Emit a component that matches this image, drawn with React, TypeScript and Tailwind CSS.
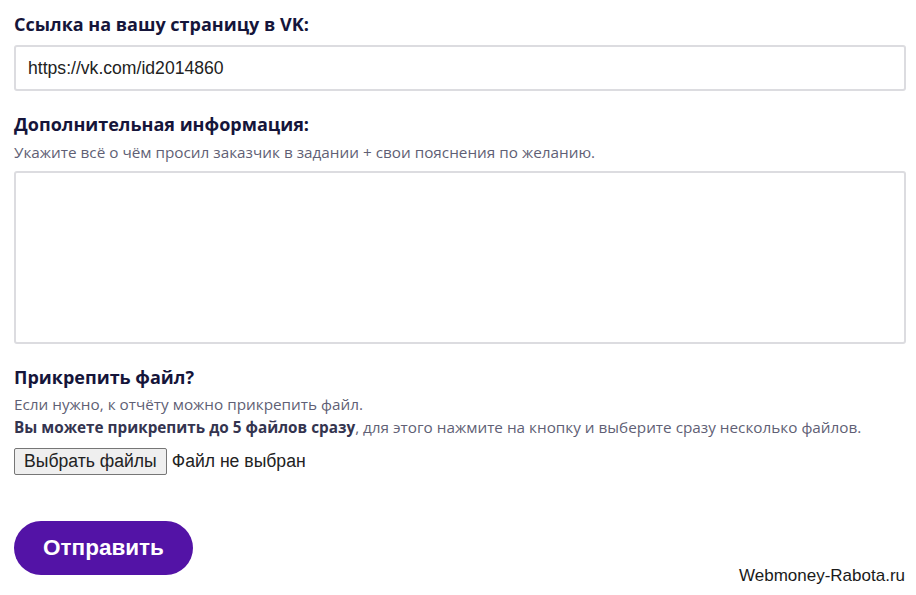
import { useState } from 'react';

// Report form: VK link, extra notes, attachments, submit
export default function App() {
  const [link, setLink] = useState('https://vk.com/id2014860');
  const [notes, setNotes] = useState('');

  const heading = "font-['Open_Sans',sans-serif] text-[18px] font-bold leading-6 text-[#15153a]";
  const hint = "font-['Open_Sans',sans-serif] text-[15.3px] leading-[23px] text-[#5f5f75]";

  return (
    <div className="relative h-[595px] w-[916px] overflow-hidden bg-white">
      <form className="flex flex-col px-[14px] pt-[12px]" onSubmit={(e) => e.preventDefault()}>
        <label className={heading}>Ссылка на вашу страницу в VK:</label>
        <input
          value={link}
          onChange={(e) => setLink(e.target.value)}
          className="mt-[9px] h-[46px] w-[892px] rounded-[3px] border-2 border-[#dcdce0] bg-white px-[12px] font-['Liberation_Sans',Arial,sans-serif] text-[17.6px] text-[#222] outline-none"
        />

        <label className={`${heading} mt-[21px]`}>Дополнительная информация:</label>
        <p className={`${hint} mt-[5px]`}>
          Укажите всё о чём просил заказчик в задании + свои пояснения по желанию.
        </p>
        <textarea
          value={notes}
          onChange={(e) => setNotes(e.target.value)}
          className="mt-[7px] h-[173px] w-[892px] resize-none rounded-[3px] border-2 border-[#dcdce0] bg-white p-3 outline-none"
        />

        <label className={`${heading} mt-[21px]`}>Прикрепить файл?</label>
        <p className={`${hint} mt-[4px]`}>Если нужно, к отчёту можно прикрепить файл.</p>
        <p className={hint}>
          <b className="font-bold text-[#34344f]">Вы можете прикрепить до 5 файлов сразу</b>, для этого нажмите на кнопку и выберите сразу несколько файлов.
        </p>
        <div className="mt-[9px] flex items-center gap-[5px] font-['Liberation_Sans',Arial,sans-serif] text-[17.6px] text-[#222]">
          <button
            type="button"
            className="h-[27px] rounded-[2px] border border-[#767676] bg-[#efefef] px-[9px] leading-none"
          >
            Выбрать файлы
          </button>
          <span>Файл не выбран</span>
        </div>

        <button
          type="submit"
          className="mt-[46px] h-[54px] w-[179px] rounded-full bg-[#5313a6] font-['Liberation_Sans',Arial,sans-serif] text-[22.5px] font-bold text-white"
        >
          Отправить
        </button>
      </form>

      <span className="absolute bottom-[7px] right-[11px] font-['Liberation_Sans',Arial,sans-serif] text-[17px] text-[#1a1a1a]">
        Webmoney-Rabota.ru
      </span>
    </div>
  );
}
